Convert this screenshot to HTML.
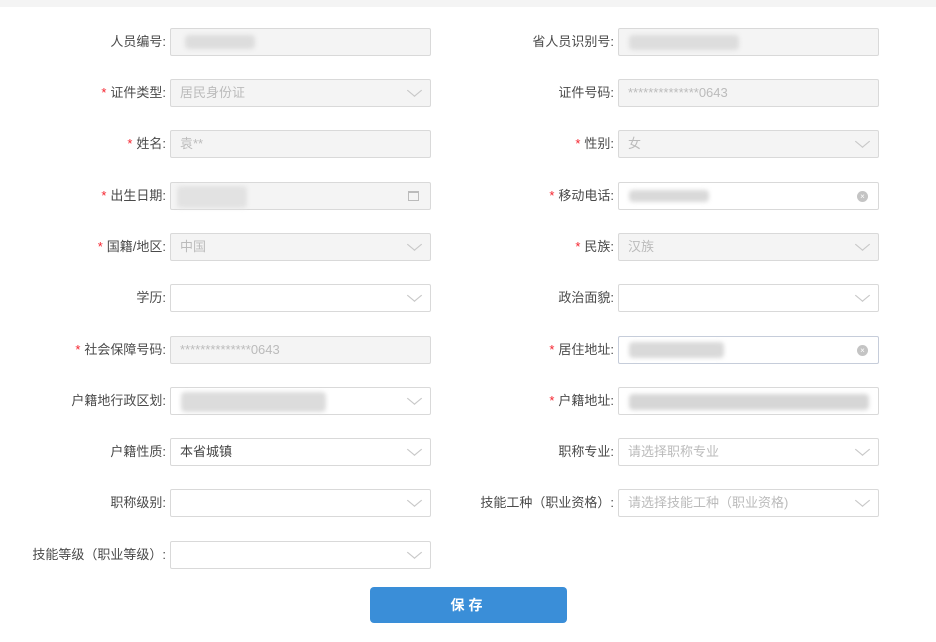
<!DOCTYPE html>
<html><head><meta charset="utf-8"><style>
*{margin:0;padding:0;box-sizing:border-box}
body{width:936px;height:642px;background:#fff;position:relative;overflow:hidden;font-family:"Liberation Sans","Noto Sans CJK SC",sans-serif;font-size:13px;color:#333}
.top{position:absolute;left:0;top:0;width:936px;height:7px;background:#f4f4f4}
.lb{position:absolute;height:28px;line-height:28px;text-align:right;white-space:nowrap;color:#4a4a4a}
.lb i{font-style:normal;color:#f5222d;margin-right:4px}
.in{position:absolute;width:261px;height:28px;border:1px solid #d9d9d9;border-radius:2px;background:#fff;line-height:26px;padding-left:9px;color:#bbb;white-space:nowrap}
.dis{background:#f4f4f4}
.v{color:#444}
.ar{position:absolute;right:11px;top:6px;width:9px;height:9px;border-right:1px solid #c8c8c8;border-bottom:1px solid #c8c8c8;transform:scaleX(1.2) rotate(45deg)}
.cl{position:absolute;right:10px;top:8px;width:11px;height:11px;border-radius:50%;background:#c4c4c4;color:#fff;font-size:8px;line-height:11px;text-align:center}
.bl{position:absolute;background:#d6d6d6;filter:blur(2px);border-radius:4px}
.btn{position:absolute;left:370px;top:587px;width:197px;height:36px;background:#3a8ed8;border-radius:4px;color:#fff;font-weight:bold;text-align:center;line-height:36px;font-size:14px;letter-spacing:4px}
</style></head><body>
<div class="top"></div>

<div class="lb" style="right:770px;top:28px">人员编号:</div>
<div class="in dis" style="left:170px;top:28px"><div class="bl" style="left:14px;top:6px;width:70px;height:14px;background:#ddd"></div></div>
<div class="lb" style="right:322px;top:28px">省人员识别号:</div>
<div class="in dis" style="left:618px;top:28px"><div class="bl" style="left:10px;top:6px;width:110px;height:15px;background:#ddd"></div></div>

<div class="lb" style="right:770px;top:79px"><i>*</i>证件类型:</div>
<div class="in dis" style="left:170px;top:79px">居民身份证<span class="ar"></span></div>
<div class="lb" style="right:322px;top:79px">证件号码:</div>
<div class="in dis" style="left:618px;top:79px">**************0643</div>

<div class="lb" style="right:770px;top:130px"><i>*</i>姓名:</div>
<div class="in dis" style="left:170px;top:130px">袁**</div>
<div class="lb" style="right:322px;top:130px"><i>*</i>性别:</div>
<div class="in dis" style="left:618px;top:130px">女<span class="ar"></span></div>

<div class="lb" style="right:770px;top:182px"><i>*</i>出生日期:</div>
<div class="in dis" style="left:170px;top:182px"><div class="bl" style="left:6px;top:3px;width:70px;height:22px;background:#e2e2e2"></div><span style="position:absolute;right:11px;top:8px;width:11px;height:10px;border:1px solid #bbb;border-top-width:2px"></span></div>
<div class="lb" style="right:322px;top:182px"><i>*</i>移动电话:</div>
<div class="in" style="left:618px;top:182px"><div class="bl" style="left:10px;top:7px;width:80px;height:12px;background:#d9d9d9"></div><span class="cl">×</span></div>

<div class="lb" style="right:770px;top:233px"><i>*</i>国籍/地区:</div>
<div class="in dis" style="left:170px;top:233px">中国<span class="ar"></span></div>
<div class="lb" style="right:322px;top:233px"><i>*</i>民族:</div>
<div class="in dis" style="left:618px;top:233px">汉族<span class="ar"></span></div>

<div class="lb" style="right:770px;top:284px">学历:</div>
<div class="in" style="left:170px;top:284px"><span class="ar"></span></div>
<div class="lb" style="right:322px;top:284px">政治面貌:</div>
<div class="in" style="left:618px;top:284px"><span class="ar"></span></div>

<div class="lb" style="right:770px;top:336px"><i>*</i>社会保障号码:</div>
<div class="in dis" style="left:170px;top:336px">**************0643</div>
<div class="lb" style="right:322px;top:336px"><i>*</i>居住地址:</div>
<div class="in" style="left:618px;top:336px;border-color:#c6cdda"><div class="bl" style="left:10px;top:5px;width:95px;height:16px;background:#d9d9d9"></div><span class="cl">×</span></div>

<div class="lb" style="right:770px;top:387px">户籍地行政区划:</div>
<div class="in" style="left:170px;top:387px"><div class="bl" style="left:10px;top:4px;width:145px;height:20px;background:#dcdcdc"></div><span class="ar"></span></div>
<div class="lb" style="right:322px;top:387px"><i>*</i>户籍地址:</div>
<div class="in" style="left:618px;top:387px"><div class="bl" style="left:10px;top:6px;width:240px;height:16px;background:#d6d6d6"></div></div>

<div class="lb" style="right:770px;top:438px">户籍性质:</div>
<div class="in" style="left:170px;top:438px"><span class="v">本省城镇</span><span class="ar"></span></div>
<div class="lb" style="right:322px;top:438px">职称专业:</div>
<div class="in" style="left:618px;top:438px">请选择职称专业<span class="ar"></span></div>

<div class="lb" style="right:770px;top:489px">职称级别:</div>
<div class="in" style="left:170px;top:489px"><span class="ar"></span></div>
<div class="lb" style="right:322px;top:489px">技能工种（职业资格）:</div>
<div class="in" style="left:618px;top:489px">请选择技能工种（职业资格)<span class="ar"></span></div>

<div class="lb" style="right:770px;top:541px">技能等级（职业等级）:</div>
<div class="in" style="left:170px;top:541px"><span class="ar"></span></div>

<div class="btn">保存</div>
</body></html>
